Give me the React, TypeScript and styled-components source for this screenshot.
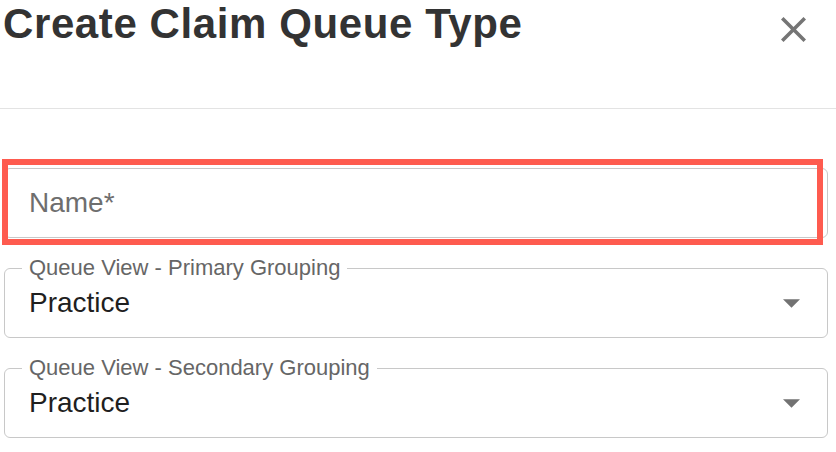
import React from 'react'
import styled, { createGlobalStyle } from 'styled-components'

const GlobalStyle = createGlobalStyle`
  body {
    margin: 0;
    background: #ffffff;
    font-family: "Liberation Sans", Arial, Helvetica, sans-serif;
  }
`

const Dialog = styled.div`
  width: 836px;
  height: 452px;
  overflow: hidden;
  background: #ffffff;
`

const Header = styled.header`
  display: flex;
  justify-content: space-between;
  align-items: flex-start;
  height: 108px;
  padding-left: 3px;
  border-bottom: 1px solid #e3e3e3;
`

const Title = styled.h1`
  margin: 0;
  font-size: 42px;
  line-height: 48px;
  font-weight: 700;
  letter-spacing: 0.6px;
  color: #333333;
`

const CloseButton = styled.button`
  display: flex;
  width: 25px;
  height: 25px;
  margin: 17px 30px 0 0;
  padding: 0;
  border: 0;
  background: none;
  color: #757575;
  cursor: pointer;
`

const Form = styled.form`
  display: flex;
  flex-direction: column;
  gap: 19px;
  margin-top: 59px;
  padding: 0 8px 0 4px;
`

const FieldWrap = styled.div`
  position: relative;
`

const InputBox = styled.div`
  display: flex;
  align-items: center;
  box-sizing: border-box;
  height: 70px;
  padding-left: 24px;
  border: 1px solid #c8c8c8;
  border-radius: 6px;
`

const Placeholder = styled.span`
  font-size: 28px;
  line-height: 32px;
  color: #6e6e6e;
`

// red annotation drawn over the required field
const Highlight = styled.div`
  position: absolute;
  top: -9px;
  left: -2px;
  right: 5px;
  bottom: -7px;
  border: 6px solid #fe5b4f;
  pointer-events: none;
`

const Outline = styled.fieldset`
  margin: 0;
  padding: 0;
  min-width: 0;
  border: 1px solid #c8c8c8;
  border-radius: 6px;
`

const Legend = styled.legend`
  margin-left: 17px;
  padding: 0 7px;
  font-size: 22px;
  line-height: 22px;
  color: #666666;
`

const SelectRow = styled.div`
  display: flex;
  align-items: center;
  justify-content: space-between;
  height: 32px;
  padding: 8px 27px 18px 24px;
`

const Value = styled.span`
  font-size: 28px;
  line-height: 32px;
  color: #1f1f1f;
`

const CloseIcon = () => (
  <svg width="25" height="25" viewBox="5 5 14 14" fill="currentColor">
    <path d="M19 6.41L17.59 5 12 10.59 6.41 5 5 6.41 10.59 12 5 17.59 6.41 19 12 13.41 17.59 19 19 17.59 13.41 12z" />
  </svg>
)

const Arrow = () => (
  <svg width="17" height="9" viewBox="0 0 10 5" fill="#727272">
    <path d="M0 0l5 5 5-5z" />
  </svg>
)

type SelectFieldProps = {
  label: string
  value: string
}

const SelectField = ({ label, value }: SelectFieldProps) => (
  <Outline>
    <Legend>{label}</Legend>
    <SelectRow>
      <Value>{value}</Value>
      <Arrow />
    </SelectRow>
  </Outline>
)

function App() {
  return (
    <Dialog>
      <GlobalStyle />
      <Header>
        <Title>Create Claim Queue Type</Title>
        <CloseButton type="button" aria-label="Close">
          <CloseIcon />
        </CloseButton>
      </Header>
      <Form>
        <FieldWrap>
          <InputBox>
            <Placeholder>Name*</Placeholder>
          </InputBox>
          <Highlight />
        </FieldWrap>
        <SelectField label="Queue View - Primary Grouping" value="Practice" />
        <SelectField label="Queue View - Secondary Grouping" value="Practice" />
      </Form>
    </Dialog>
  )
}

export default App
